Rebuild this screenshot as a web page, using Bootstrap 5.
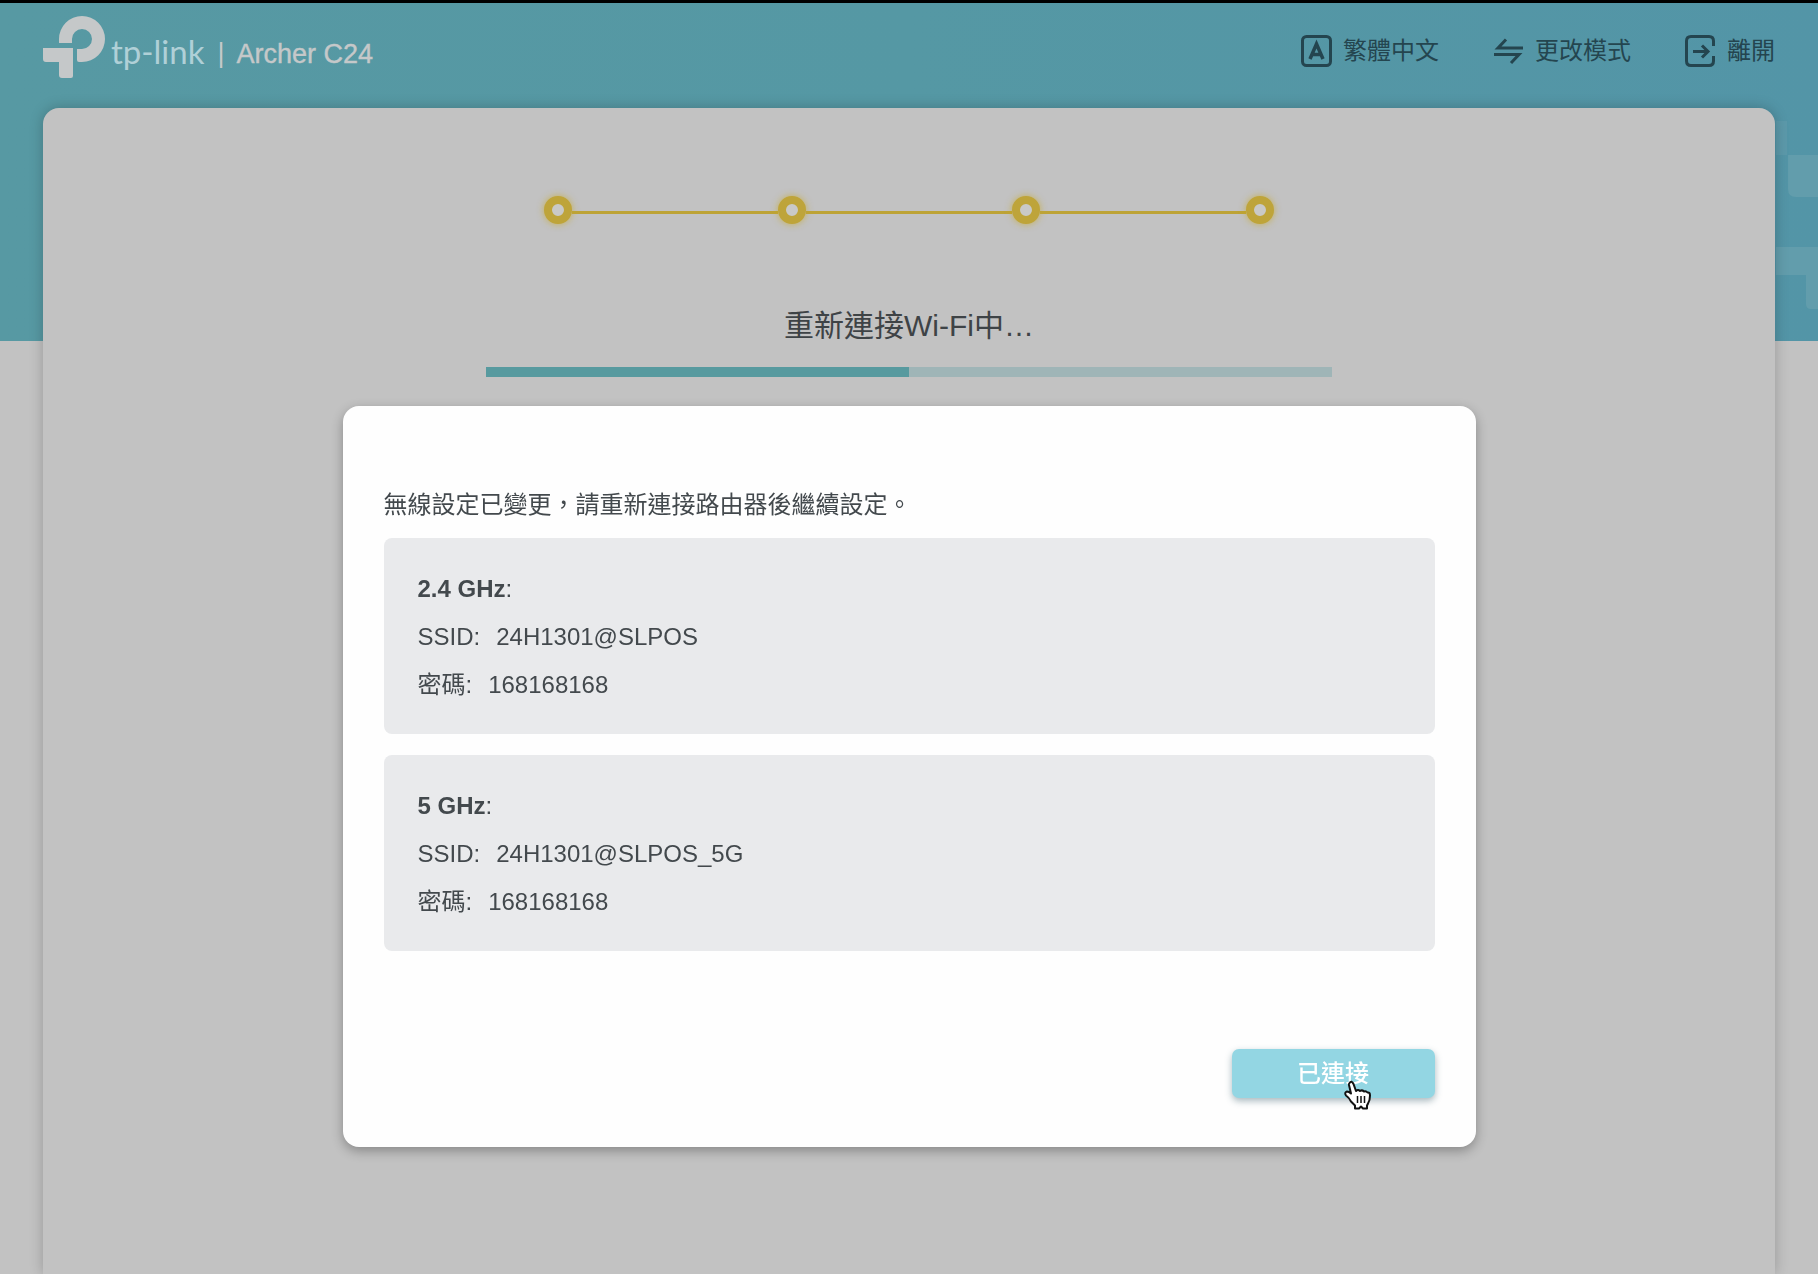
<!DOCTYPE html>
<html lang="zh-Hant">
<head>
<meta charset="utf-8">
<meta name="viewport" content="width=device-width, initial-scale=1">
<title>Archer C24</title>
<link href="https://cdn.jsdelivr.net/npm/bootstrap@5.3.0/dist/css/bootstrap.min.css" rel="stylesheet">
<style>
  body { font-family: "Liberation Sans", "Noto Sans CJK TC", sans-serif; font-size: 24px; line-height: 48px; color: #43494d; background: #c2c2c2; border-top: 3px solid #000; overflow: hidden; }
  .page-shell { min-height: calc(100vh - 3px); padding: 0 43px; background: linear-gradient(90deg, #5799a3, #5598a4 50%, #5395a7) no-repeat top / 100% 338px; }
  .sky-shapes { position: absolute; top: 0; right: 0; z-index: 0; }
  .top-bar { height: 105px; padding: 0 0 10px; z-index: 1; }
  .brand { color: #c5c8c9; font-size: 27px; }
  .brand:hover { color: #c5c8c9; }
  .brand-mark { margin-bottom: 7px; }
  .brand-name { font-family: Lato, sans-serif; font-size: 33px; line-height: 48px; color: #b0d0d7; margin-left: 5px; }
  .brand-sep { margin: 4px 12px 0 13px; }
  .brand-model { margin-top: 6px; -webkit-text-stroke: 0.4px; }
  .top-links { gap: 54px; }
  .top-link { color: #24454f; gap: 11px; padding: 0; }
  .panel-main { background: #c2c2c2; border-radius: 16px 16px 0 0; box-shadow: 0 0 14px rgba(0,0,0,.22); z-index: 1; padding-top: 88px; }
  .steps-track { width: 731px; margin-bottom: 78px; }
  .step-dot { width: 28px; height: 28px; border: 8px solid #bea43a; border-radius: 50%; background: #c9c9c7; box-shadow: 0 0 7px rgba(200,166,30,.7); flex: none; }
  .step-line { flex: 1; height: 3px; margin-top: 5px; background: #bda336; }
  .wait-title { font-size: 30px; line-height: 48px; margin-bottom: 17px; color: #3e4346; }
  .progress-wait { width: 846px; height: 10px; border-radius: 0; background: #9fb5b7; }
  .progress-wait .progress-bar { background: #579a9f; }
  .dialog-wide { max-width: 1133px; margin: 406px auto 0; }
  .dialog-box { border: 0; border-radius: 16px; background: #fefefe; color: #43494d; box-shadow: 0 4px 12px rgba(0,0,0,.3); padding: 75px 41px 49px; }
  .message { margin-bottom: 9px; }
  .band-card { background: #e9eaec; border-radius: 8px; padding: 27px 34px 25px; margin-bottom: 21px; }
  .band-card dl > div { gap: 16px; }
  .actions { margin-top: 77px; }
  .btn-done { width: 203px; height: 49px; padding: 0; line-height: 49px; font-size: 24px; font-weight: 500; color: #fff; background: #93d6e3; border: 0; border-radius: 7px; box-shadow: 0 3px 7px rgba(40,80,95,.4); }
  .btn-done:hover { background: #93d6e3; color: #fff; }
  .hand { position: absolute; left: 111px; top: 31px; }
</style>
<script src="https://cdn.jsdelivr.net/npm/bootstrap@5.3.0/dist/js/bootstrap.bundle.min.js"></script>
</head>
<body>
<div class="page-shell position-relative d-flex flex-column">
  <svg class="sky-shapes" width="42" height="338" aria-hidden="true" fill="#629dac">
    <path d="M0 118h11v34H0z" opacity=".6"/>
    <path d="M12 152h30v42H20q-8 0-8-8z"/>
    <path d="M0 244h42v62h-7q-5 0-5-5v-29H0z"/>
  </svg>
  <header class="top-bar position-relative d-flex align-items-center justify-content-between">
    <a class="brand d-flex align-items-center text-decoration-none" href="#">
      <svg class="brand-mark" width="63" height="64" viewBox="43 15 63 64" fill="#c5c8c9" aria-hidden="true">
        <path d="M59 43V39a23 23 0 1 1 23 23H79q-2 0-2-2V49h5a10 10 0 1 0-10-10v4z"/>
        <path d="M43 48h30v28q0 2-2 2h-9q-3 0-3-3V62H46q-3 0-3-3z"/>
      </svg>
      <span class="brand-name">tp-link</span>
      <span class="brand-sep">|</span>
      <span class="brand-model">Archer C24</span>
    </a>
    <nav class="top-links d-flex align-items-center">
      <a class="top-link d-flex align-items-center text-decoration-none" href="#">
        <svg width="31" height="32" viewBox="0 0 31 32" fill="none" stroke="currentColor" stroke-width="3" aria-hidden="true"><rect x="1.5" y="1.5" width="28" height="29" rx="4"/><path d="M9 24 15.500 9 22 24M11 19.500h9" stroke-width="3.500"/></svg>
        <span>繁體中文</span>
      </a>
      <a class="top-link d-flex align-items-center text-decoration-none" href="#">
        <svg width="31" height="32" viewBox="0 0 31 32" fill="none" stroke="currentColor" stroke-width="3" aria-hidden="true"><path d="M30 13H5L13 4.500M1 19.500H26L18 28"/></svg>
        <span>更改模式</span>
      </a>
      <a class="top-link d-flex align-items-center text-decoration-none" href="#">
        <svg width="31" height="32" viewBox="0 0 31 32" fill="none" stroke="currentColor" stroke-width="3" aria-hidden="true"><path d="M28.500 11V6q0-4.500-4.500-4.500H6Q1.500 1.500 1.500 6v20q0 4.500 4.500 4.500h18q4.500 0 4.500-4.500v-5M8 16.500h14M17 10.500l6 6-6 6"/></svg>
        <span>離開</span>
      </a>
    </nav>
  </header>

  <main class="panel-main position-relative flex-grow-1 d-flex flex-column align-items-center">
    <div class="steps-track d-flex align-items-center">
      <span class="step-dot"></span><span class="step-line"></span>
      <span class="step-dot"></span><span class="step-line"></span>
      <span class="step-dot"></span><span class="step-line"></span>
      <span class="step-dot"></span>
    </div>
    <h1 class="wait-title fw-normal">重新連接Wi-Fi中…</h1>
    <div class="progress progress-wait" role="progressbar" aria-label="重新連接Wi-Fi中" aria-valuenow="50" aria-valuemin="0" aria-valuemax="100">
      <div class="progress-bar" style="width:50%"></div>
    </div>
  </main>
</div>

<div class="modal d-block" role="dialog" aria-labelledby="message">
  <div class="modal-dialog dialog-wide">
    <div class="modal-content dialog-box">
      <p class="message" id="message">無線設定已變更，請重新連接路由器後繼續設定。</p>
      <section class="band-card">
        <div><strong>2.4 GHz</strong>:</div>
        <dl class="m-0">
          <div class="d-flex"><dt class="fw-normal">SSID:</dt><dd class="m-0">24H1301@SLPOS</dd></div>
          <div class="d-flex"><dt class="fw-normal">密碼:</dt><dd class="m-0">168168168</dd></div>
        </dl>
      </section>
      <section class="band-card">
        <div><strong>5 GHz</strong>:</div>
        <dl class="m-0">
          <div class="d-flex"><dt class="fw-normal">SSID:</dt><dd class="m-0">24H1301@SLPOS_5G</dd></div>
          <div class="d-flex"><dt class="fw-normal">密碼:</dt><dd class="m-0">168168168</dd></div>
        </dl>
      </section>
      <div class="actions d-flex justify-content-end">
        <div class="position-relative">
          <button type="button" class="btn btn-done d-block">已連接</button>
          <svg class="hand" width="30" height="30" viewBox="0 0 30 30" fill="#fff" stroke="#111" stroke-width="2" stroke-linejoin="round" aria-hidden="true">
            <path d="M6.500 3Q8.500 0 10.500 4l2.500 7q2-2 4 0 2-1.500 4 .5 2-1 3.500 1 2.500-.5 2.500 3 0 5-2 8l-1 2v3h-4l-2-2-2 2h-4v-3l-4-4q-2-4-5-6-2-3 1-4 2 0 4 2L6 5Q5.800 4 6.500 3z"/>
            <path d="M14.500 16v7M18 16v7M21.500 16v7" stroke-width="1.500" fill="none"/>
          </svg>
        </div>
      </div>
    </div>
  </div>
</div>
</body>
</html>
